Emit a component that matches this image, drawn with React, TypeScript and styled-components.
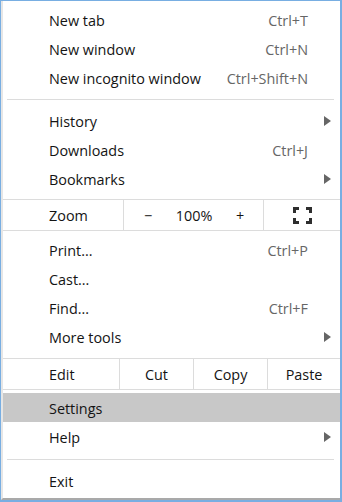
import React from 'react';
import styled, { createGlobalStyle } from 'styled-components';

const GlobalStyle = createGlobalStyle`
  html, body {
    margin: 0;
    padding: 0;
    background: #78aee2;
  }
  * {
    box-sizing: border-box;
  }
`;

// Window frame behind the menu
const Frame = styled.div`
  width: 342px;
  height: 502px;
  padding: 1px 2px 2px 1px;
  background: #78aee2;
  display: flex;
`;

// The menu panel
const Menu = styled.div`
  flex: 1;
  display: flex;
  flex-direction: column;
  background: #fff;
  border-left: 2px solid #e6e6e6;
  border-bottom: 2px solid #a9a9a9;
  padding: 4px 0 1px;
  font-family: "Open Sans", "Liberation Sans", sans-serif;
  font-size: 14.4px;
  color: #141414;
`;

const Item = styled.div<{ $active?: boolean }>`
  height: 29px;
  flex: none;
  display: flex;
  align-items: center;
  padding: 1px 10px 0 46px;
  background: ${p => (p.$active ? '#c8c8c8' : 'transparent')};
`;

const Label = styled.span`
  flex: 1;
`;

const Shortcut = styled.span`
  color: #666;
  margin-right: 22px;
`;

const Arrow = styled.span`
  width: 0;
  height: 0;
  border-top: 5px solid transparent;
  border-bottom: 5px solid transparent;
  border-left: 7px solid #666;
  margin-right: -1px;
`;

const Separator = styled.div<{ $top: number; $bottom: number }>`
  flex: none;
  height: 1px;
  margin: ${p => p.$top}px 6px ${p => p.$bottom}px 4px;
  background: #dcdcdc;
`;

// Rows with inline buttons (Zoom / Edit)
const ButtonRow = styled.div<{ $cols: string; $top: number; $bottom: number }>`
  flex: none;
  height: 32px;
  margin: ${p => p.$top}px 0 ${p => p.$bottom}px;
  border-top: 1px solid #dcdcdc;
  border-bottom: 1px solid #dcdcdc;
  display: grid;
  grid-template-columns: ${p => p.$cols};
`;

const RowLabel = styled.div`
  display: flex;
  align-items: center;
  padding: 1px 0 0 46px;
`;

const Cell = styled.div`
  display: flex;
  align-items: center;
  justify-content: center;
  padding-top: 1px;
  border-left: 1px solid #dcdcdc;
`;

const ZoomControls = styled.div`
  display: grid;
  grid-template-columns: 48px 44px 48px;
  border-left: 1px solid #dcdcdc;
`;

const ZoomPart = styled.span`
  display: flex;
  align-items: center;
  justify-content: center;
  padding-top: 1px;
`;

const FullscreenIcon = () => (
  <svg width="19" height="17" viewBox="0 0 19 17" fill="none" stroke="#2e2e2e" strokeWidth="3">
    <path d="M1.5 6V1.5H6M13 1.5h4.5V6M17.5 11v4.5H13M6 15.5H1.5V11" />
  </svg>
);

const App: React.FC = () => (
  <>
    <GlobalStyle />
    <Frame>
      <Menu>
        <Item>
          <Label>New tab</Label>
          <Shortcut>Ctrl+T</Shortcut>
        </Item>
        <Item>
          <Label>New window</Label>
          <Shortcut>Ctrl+N</Shortcut>
        </Item>
        <Item>
          <Label>New incognito window</Label>
          <Shortcut>Ctrl+Shift+N</Shortcut>
        </Item>
        <Separator $top={7} $bottom={6} />
        <Item>
          <Label>History</Label>
          <Arrow />
        </Item>
        <Item>
          <Label>Downloads</Label>
          <Shortcut>Ctrl+J</Shortcut>
        </Item>
        <Item>
          <Label>Bookmarks</Label>
          <Arrow />
        </Item>
        <ButtonRow $cols="120px 140px 1fr" $top={6} $bottom={4}>
          <RowLabel>Zoom</RowLabel>
          <ZoomControls>
            <ZoomPart>−</ZoomPart>
            <ZoomPart>100%</ZoomPart>
            <ZoomPart>+</ZoomPart>
          </ZoomControls>
          <Cell>
            <FullscreenIcon />
          </Cell>
        </ButtonRow>
        <Item>
          <Label>Print...</Label>
          <Shortcut>Ctrl+P</Shortcut>
        </Item>
        <Item>
          <Label>Cast...</Label>
        </Item>
        <Item>
          <Label>Find...</Label>
          <Shortcut>Ctrl+F</Shortcut>
        </Item>
        <Item>
          <Label>More tools</Label>
          <Arrow />
        </Item>
        <ButtonRow $cols="116px 74px 74px 1fr" $top={7} $bottom={3}>
          <RowLabel>Edit</RowLabel>
          <Cell>Cut</Cell>
          <Cell>Copy</Cell>
          <Cell>Paste</Cell>
        </ButtonRow>
        <Item $active>
          <Label>Settings</Label>
        </Item>
        <Item>
          <Label>Help</Label>
          <Arrow />
        </Item>
        <Separator $top={8} $bottom={6} />
        <Item>
          <Label>Exit</Label>
        </Item>
      </Menu>
    </Frame>
  </>
);

export default App;
